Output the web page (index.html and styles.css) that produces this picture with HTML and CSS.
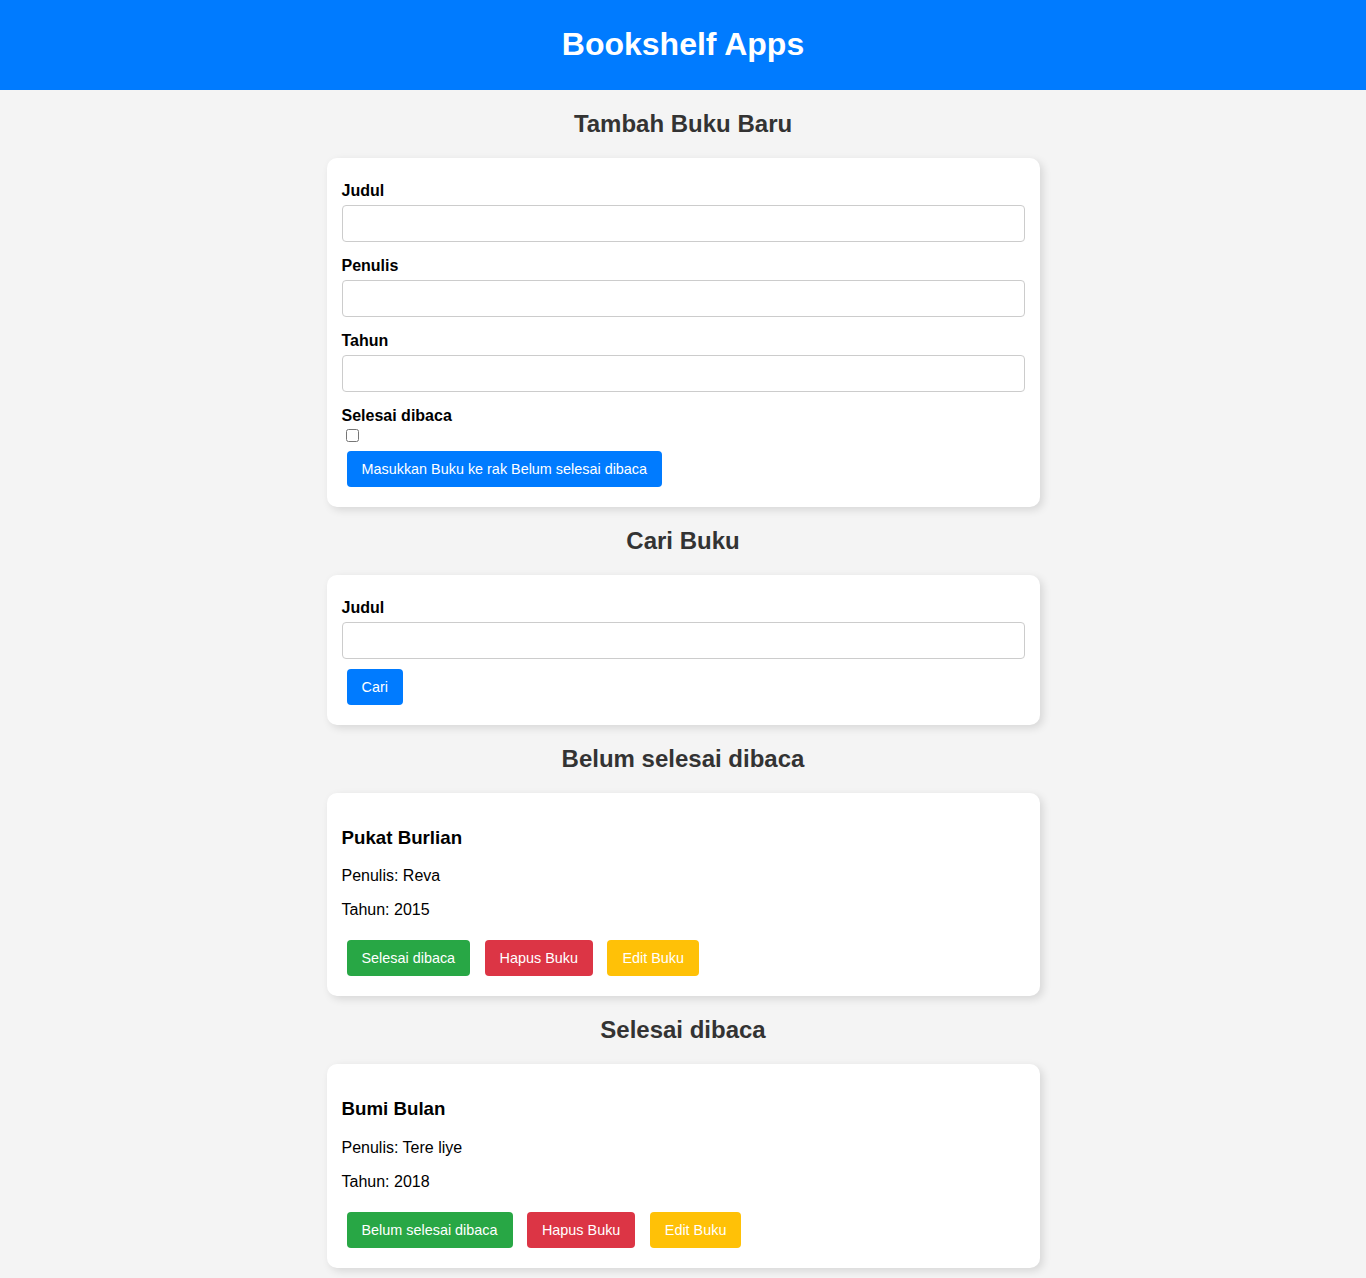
FILE: index.html
```html
<!DOCTYPE html>
<html lang="id">
<head>
<meta charset="UTF-8">
<title>Bookshelf Apps</title>
<link rel="stylesheet" href="styles.css">
</head>
<body>
<header class="app-header">
  <h1>Bookshelf Apps</h1>
</header>
<main class="main">
  <h2 class="section-title">Tambah Buku Baru</h2>
  <section class="card">
    <form class="form">
      <label class="field-label" for="inputBookTitle">Judul</label>
      <input class="text-input" id="inputBookTitle" type="text">
      <label class="field-label" for="inputBookAuthor">Penulis</label>
      <input class="text-input" id="inputBookAuthor" type="text">
      <label class="field-label" for="inputBookYear">Tahun</label>
      <input class="text-input" id="inputBookYear" type="number">
      <label class="field-label check-label" for="inputBookIsComplete">Selesai dibaca</label>
      <input class="check-input" id="inputBookIsComplete" type="checkbox">
      <button class="btn btn-blue" type="button">Masukkan Buku ke rak Belum selesai dibaca</button>
    </form>
  </section>

  <h2 class="section-title">Cari Buku</h2>
  <section class="card">
    <form class="form">
      <label class="field-label" for="searchBookTitle">Judul</label>
      <input class="text-input text-input-last" id="searchBookTitle" type="text">
      <button class="btn btn-blue" type="button">Cari</button>
    </form>
  </section>

  <h2 class="section-title">Belum selesai dibaca</h2>
  <section class="card">
    <article class="book">
      <h3 class="book-title">Pukat Burlian</h3>
      <p class="book-meta">Penulis: Reva</p>
      <p class="book-meta">Tahun: 2015</p>
      <div class="actions">
        <button class="btn btn-green" type="button">Selesai dibaca</button>
        <button class="btn btn-red" type="button">Hapus Buku</button>
        <button class="btn btn-yellow" type="button">Edit Buku</button>
      </div>
    </article>
  </section>

  <h2 class="section-title">Selesai dibaca</h2>
  <section class="card">
    <article class="book">
      <h3 class="book-title">Bumi Bulan</h3>
      <p class="book-meta">Penulis: Tere liye</p>
      <p class="book-meta">Tahun: 2018</p>
      <div class="actions">
        <button class="btn btn-green" type="button">Belum selesai dibaca</button>
        <button class="btn btn-red" type="button">Hapus Buku</button>
        <button class="btn btn-yellow" type="button">Edit Buku</button>
      </div>
    </article>
  </section>
</main>
</body>
</html>
```
FILE: styles.css
```css
html, body {
  margin: 0;
  padding: 0;
}

body {
  background: #f4f4f4;
  font-family: "Liberation Sans", Arial, sans-serif;
  font-size: 16px;
  color: #000;
}

.app-header {
  background: #007bff;
  color: #fff;
  text-align: center;
  height: 90px;
  display: flex;
  align-items: center;
  justify-content: center;
}

.app-header h1 {
  margin: 0 0 2px;
  font-size: 32px;
  font-weight: bold;
}

.main {
  padding-bottom: 12px;
}

.section-title {
  text-align: center;
  color: #333;
  font-size: 24px;
  font-weight: bold;
  margin: 20px 0;
  line-height: 28px;
}

.card {
  width: 50%;
  margin: 0 auto;
  padding: 15px;
  background: #fff;
  border-radius: 10px;
  box-shadow: 3px 3px 8px rgba(0, 0, 0, 0.12);
}

.form {
  margin: 0;
}

.field-label {
  display: block;
  font-weight: bold;
  font-size: 16px;
  margin: 9px 0 5px;
}

.check-label {
  margin-bottom: 0;
}

.text-input {
  display: block;
  width: 100%;
  box-sizing: border-box;
  padding: 10px;
  margin: 0 0 15px;
  border: 1px solid #ccc;
  border-radius: 4px;
  font-family: "Liberation Sans", Arial, sans-serif;
  font-size: 13.333px;
  background: #fff;
}

.text-input-last {
  margin-bottom: 5px;
}

.check-input {
  display: block;
  width: 13px;
  height: 13px;
  margin: 4px 0 4px 4px;
}

.btn {
  display: inline-block;
  margin: 5px;
  padding: 10px 15px;
  border: none;
  border-radius: 4px;
  color: #fff;
  font-family: "Liberation Sans", Arial, sans-serif;
  font-size: 14.4px;
  line-height: 16px;
  cursor: pointer;
}

.btn-blue { background: #007bff; }
.btn-green { background: #28a745; }
.btn-red { background: #dc3545; }
.btn-yellow { background: #ffc107; }

.book-title {
  font-size: 18.72px;
  font-weight: bold;
  margin: 18.72px 0;
}

.book-meta {
  margin: 16px 0;
}

.actions {
  font-size: 16px;
  line-height: 16px;
}
```
